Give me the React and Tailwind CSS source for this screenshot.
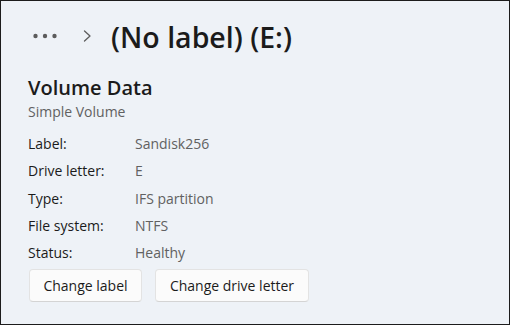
import React from 'react';

const rows = [
  ['Label:', 'Sandisk256'],
  ['Drive letter:', 'E'],
  ['Type:', 'IFS partition'],
  ['File system:', 'NTFS'],
  ['Status:', 'Healthy'],
];

function Dots() {
  return (
    <svg width="24" height="6" viewBox="0 0 24 6" className="text-[#5c5c5c]">
      <circle cx="2.5" cy="3" r="2.2" fill="currentColor" />
      <circle cx="12" cy="3" r="2.2" fill="currentColor" />
      <circle cx="21.5" cy="3" r="2.2" fill="currentColor" />
    </svg>
  );
}

function Chevron() {
  return (
    <svg width="9" height="12" viewBox="0 0 9 12" fill="none" className="text-[#5c5c5c]">
      <path d="M1.5 1 L7 6 L1.5 11" stroke="currentColor" strokeWidth="1.3" strokeLinecap="round" strokeLinejoin="round" />
    </svg>
  );
}

export default function App() {
  return (
    <div
      className="w-[510px] h-[325px] box-border border border-[#1c1c1c] bg-[#eef2f7] text-[#1b1b1b] overflow-hidden"
      style={{ fontFamily: '"Open Sans", "Noto Sans", sans-serif' }}
    >
      {/* breadcrumb */}
      <div className="flex items-center h-[40px] mt-[15px] pl-[32px]">
        <Dots />
        <div className="ml-[26px]">
          <Chevron />
        </div>
        <h1 className="ml-[19px] text-[28.5px] font-semibold leading-[40px] mt-[1px]">(No label) (E:)</h1>
      </div>

      <div className="pl-[27px] pt-[19px]">
        <h2 className="text-[20px] font-semibold leading-[26px]">Volume Data</h2>
        <p className="mt-[1px] text-[14px] leading-[20px] text-[#616161]">Simple Volume</p>

        <div className="mt-[8px]">
          {rows.map(([k, v]) => (
            <div key={k} className="flex text-[14px] leading-[27.3px]">
              <span className="w-[107px]">{k}</span>
              <span className="text-[#616161]">{v}</span>
            </div>
          ))}
        </div>

        <div className="flex gap-[13px] mt-[3px] pl-[1px]">
          <button className="h-[33px] w-[113px] rounded-[4px] border border-[#e3e3e3] border-b-[#d4d4d4] bg-[#fbfbfb] text-[14px] text-[#1b1b1b]">
            Change label
          </button>
          <button className="h-[33px] w-[154px] rounded-[4px] border border-[#e3e3e3] border-b-[#d4d4d4] bg-[#fbfbfb] text-[14px] text-[#1b1b1b]">
            Change drive letter
          </button>
        </div>
      </div>
    </div>
  );
}
